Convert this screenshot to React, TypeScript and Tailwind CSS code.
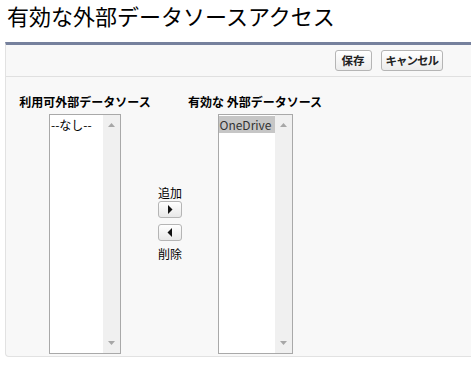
const jp = "font-['Meiryo','Noto_Sans_CJK_JP','DejaVu_Sans',sans-serif]";

function ScrollList({ items, selected }: { items: string[]; selected?: string }) {
  return (
    <div className="flex h-[240px] border border-[#a9a9a9] bg-white">
      <div className="flex-1 pt-px">
        {items.map((it) => (
          <div
            key={it}
            className={
              "h-[17px] pl-px text-[12px] leading-[17px] " +
              (it === selected ? "bg-[#c6c6c6] text-[#333]" : "text-black")
            }
          >
            {it}
          </div>
        ))}
      </div>
      {/* scrollbar */}
      <div className="flex w-[17px] flex-col justify-between bg-[#f0f0f0] py-[7px]">
        <svg width="17" height="5" viewBox="0 0 17 5">
          <path d="M5 5 L8.5 1 L12 5 Z" fill="#a7a7a7" />
        </svg>
        <svg width="17" height="5" viewBox="0 0 17 5">
          <path d="M5 0 L12 0 L8.5 4 Z" fill="#a7a7a7" />
        </svg>
      </div>
    </div>
  );
}

function ArrowButton({ dir }: { dir: "right" | "left" }) {
  return (
    <div className="flex h-[17px] w-[24px] items-center justify-center rounded-[3px] border border-[#b5b5b5] bg-gradient-to-b from-white to-[#e8e8e8]">
      <svg width="6" height="9" viewBox="0 0 6 9">
        {dir === "right" ? (
          <path d="M1 0 L5.5 4.5 L1 9 Z" fill="#111" />
        ) : (
          <path d="M5 0 L0.5 4.5 L5 9 Z" fill="#111" />
        )}
      </svg>
    </div>
  );
}

export default function App() {
  return (
    <div className={"min-h-[371px] w-[471px] overflow-hidden bg-white " + jp}>
      <h1 className="pl-[7px] pt-[1px] text-[22px] leading-[28px] text-black">
        有効な外部データソースアクセス
      </h1>

      {/* PANEL */}
      <div className="ml-[5px] mt-[13px] h-[315px] rounded-bl-[4px] border-l border-b border-t-[3px] border-[#e2e2e2] border-t-[#76819d] bg-[#f8f8f8]">
        <div className="flex h-[32px] items-center justify-end gap-[9px] border-b border-[#e0e0e0] pr-[28px]">
          <button className="h-[21px] rounded-[3px] border border-[#b5b5b5] bg-gradient-to-b from-white to-[#ececec] px-[6px] text-[11.5px] font-bold leading-[19px] text-[#222]">
            保存
          </button>
          <button className="h-[21px] rounded-[3px] border border-[#b5b5b5] bg-gradient-to-b from-white to-[#ececec] px-[4px] text-[11.5px] font-bold leading-[19px] tracking-[-1px] text-[#222]">
            キャンセル
          </button>
        </div>

        <div className="flex pl-[12px] pt-[16px]">
          <div className="flex w-[134px] flex-col items-center">
            <div className="h-[18px] whitespace-nowrap text-[12px] font-bold leading-[18px] text-black">
              利用可外部データソース
            </div>
            <div className="mt-[3px] w-[72px]">
              <ScrollList items={["--なし--"]} />
            </div>
          </div>

          <div className="flex w-[36px] flex-col items-center pt-[92px] text-[12px] leading-[15px] text-black">
            <div>追加</div>
            <div className="mt-[1px]">
              <ArrowButton dir="right" />
            </div>
            <div className="mt-[6px]">
              <ArrowButton dir="left" />
            </div>
            <div className="mt-[5px]">削除</div>
          </div>

          <div className="flex w-[134px] flex-col items-center">
            <div className="h-[18px] whitespace-nowrap text-[12px] font-bold leading-[18px] text-black">
              有効な 外部データソース
            </div>
            <div className="mt-[3px] w-[75px]">
              <ScrollList items={["OneDrive"]} selected="OneDrive" />
            </div>
          </div>
        </div>
      </div>
    </div>
  );
}
